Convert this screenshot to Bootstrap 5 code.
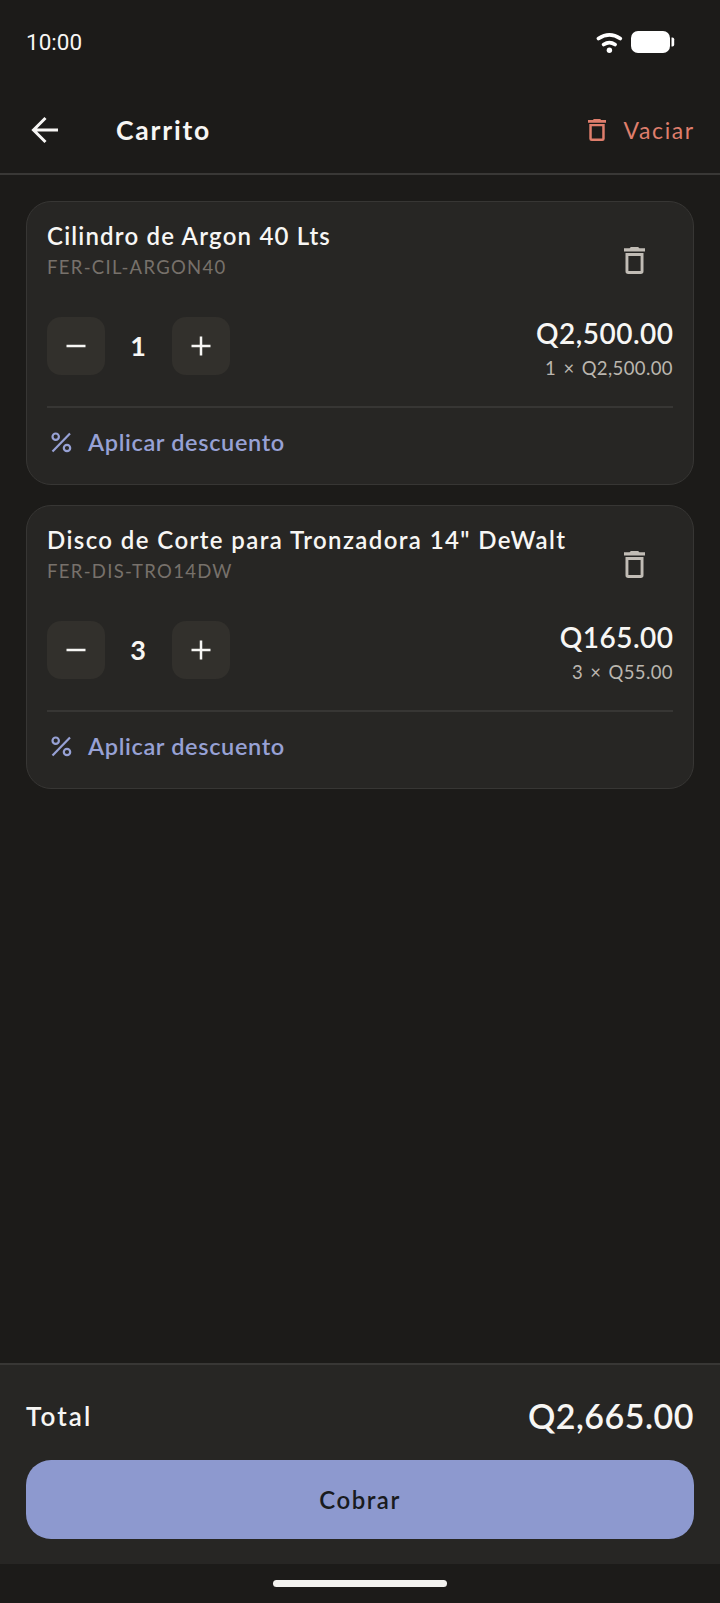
<!DOCTYPE html>
<html lang="es" data-bs-theme="dark">
<head>
<meta charset="utf-8">
<meta name="viewport" content="width=device-width, initial-scale=1">
<title>Carrito</title>
<link href="https://cdn.jsdelivr.net/npm/bootstrap@5.3.0/dist/css/bootstrap.min.css" rel="stylesheet">
<style>
body{background:#1c1b19;color:#f7f6f4;font-family:Lato,"Open Sans",sans-serif;height:1603px;overflow:hidden}
svg{display:block;flex:none}
.t{white-space:nowrap;display:inline-block}
.status-bar{height:84px;padding:0 45px 0 26px}
.clock{font:400 22.5px/28px Roboto,sans-serif}
.app-bar{height:91px;border-bottom:2px solid #393836;padding:3px 26px 0 31px}
.app-title{font-size:26.5px;font-weight:700;line-height:32px;margin-left:57px;letter-spacing:1.8px}
.clear-btn{color:#df7e6c;font-size:23px;line-height:30px;gap:18px}
.clear-btn .t{letter-spacing:1.6px;margin-right:-.8px}
.items{padding:26px 26px 0;gap:20px}
.item-card{background:#272624;border:1.5px solid #373634;border-radius:25px;height:284px;padding:19px 20px 0 20px}
.item-head{height:77px}
.item-name{font-size:24px;font-weight:600;line-height:30px;letter-spacing:1.2px}
.item-name.long-name{letter-spacing:1.4px}
.sku{font-size:18.5px;line-height:32px;color:#77716b;letter-spacing:1.3px}
.trash-box{width:77px;height:79px;color:#c1bcb5}
.item-mid{height:58px;margin-top:19px}
.step{width:58px;height:58px;border-radius:14px;background:#32302c;color:#f7f6f4}
.qty{width:67px;font-size:27px;font-weight:700;line-height:58px;padding-right:1px}
.amounts{padding-top:8px}
.price{font-size:28px;font-weight:600;line-height:36px}
.price .t{letter-spacing:.5px;margin-right:-.5px}
.unit{font-size:18.5px;line-height:34px;color:#bbb6af;letter-spacing:.4px;word-spacing:2px}
.discount{border-top:2px solid #373634;margin-top:31px;padding:19px 0 0 4px;color:#97a1d5;font-size:23.5px;font-weight:600;line-height:30px;gap:16px;letter-spacing:.65px}
.summary{height:201px;background:#272624;border-top:2px solid #383735;padding:30px 26px 0}
.total-row{height:42px}
.total-label{font-size:26px;font-weight:600;letter-spacing:2.1px}
.total-value{font-size:34px;font-weight:600;line-height:42px;letter-spacing:.5px}
.pay{height:79px;margin-top:23px;border-radius:25px;background:#8d99cf;color:#191b20;font-size:24px;font-weight:600;letter-spacing:1.5px}
.nav-zone{height:39px;padding-top:16px}
.nav-pill{width:174px;height:7px;border-radius:4px;background:#f3f2ef}
</style>
<script src="https://cdn.jsdelivr.net/npm/bootstrap@5.3.0/dist/js/bootstrap.bundle.min.js"></script>
</head>
<body class="d-flex flex-column">
<svg width="0" height="0" class="position-absolute"><defs>
<symbol id="trash" viewBox="0 0 21 27" preserveAspectRatio="none"><path fill="currentColor" fill-rule="evenodd" d="M0 1.3h5.600L6.900 0h7.200l1.300 1.300H21v3.300H0zM1.500 6h18v18.300a2.700 2.700 0 0 1-2.700 2.700H4.200a2.700 2.700 0 0 1-2.700-2.700zM4.400 9v15h12.200V9z"/></symbol>
</defs></svg>
<div class="status-bar d-flex align-items-center justify-content-between"><span class="clock t">10:00</span>
<div class="d-flex align-items-center"><svg class="me-2" width="27" height="21" viewBox="0 0 27 21" fill="none" stroke="#fff" stroke-width="3.8" stroke-linecap="round"><path d="M2.500 6.500Q13.500-.800 24.200 6.500M7.700 12.500q5.700-3.700 11.300 0"/><circle cx="13.400" cy="18.300" r="2.700" fill="#fff" stroke="none"/></svg>
<svg width="44" height="22" viewBox="0 0 44 22" fill="#fff"><rect width="39" height="22" rx="7"/><path d="M40.500 6.500h1q1.700 0 1.700 1.700v5.600q0 1.700-1.700 1.700h-1z"/></svg></div></div>
<header class="app-bar d-flex align-items-center"><svg width="28" height="28" viewBox="0 0 28 28" fill="none" stroke="currentColor" stroke-width="3"><path d="M27 14H3M14.500 2 2.500 14l12 12"/></svg>
<span class="app-title t">Carrito</span><span class="clear-btn d-flex align-items-center ms-auto"><svg width="18" height="22"><use href="#trash"/></svg><span class="t">Vaciar</span></span></header>
<main class="items d-flex flex-column flex-grow-1">
<article class="item-card">
<div class="item-head d-flex justify-content-between"><div><div><span class="item-name t">Cilindro de Argon 40 Lts</span></div><div class="sku"><span class="t">FER-CIL-ARGON40</span></div></div><div class="trash-box d-flex align-items-center justify-content-center"><svg width="21" height="27"><use href="#trash"/></svg></div></div>
<div class="item-mid d-flex align-items-center"><button class="step btn border-0 p-0 d-flex align-items-center justify-content-center"><svg width="20" height="20" stroke="currentColor" stroke-width="2.5"><path d="M.5 10h19"/></svg></button><span class="qty text-center">1</span><button class="step btn border-0 p-0 d-flex align-items-center justify-content-center"><svg width="20" height="20" stroke="currentColor" stroke-width="2.5"><path d="M.5 10h19M10 .5v19"/></svg></button>
<div class="amounts ms-auto text-end"><div class="price"><span class="t">Q2,500.00</span></div><div class="unit"><span class="t">1 × Q2,500.00</span></div></div></div>
<div class="discount d-flex align-items-center"><svg width="21" height="21" fill="none" stroke="currentColor" stroke-width="2.2"><circle cx="4.700" cy="4.700" r="3.200"/><circle cx="16" cy="16" r="3.200"/><path d="M1.500 19.500 19 1.500"/></svg><span class="t">Aplicar descuento</span></div>
</article>
<article class="item-card">
<div class="item-head d-flex justify-content-between"><div><div><span class="item-name long-name t">Disco de Corte para Tronzadora 14" DeWalt</span></div><div class="sku"><span class="t">FER-DIS-TRO14DW</span></div></div><div class="trash-box d-flex align-items-center justify-content-center"><svg width="21" height="27"><use href="#trash"/></svg></div></div>
<div class="item-mid d-flex align-items-center"><button class="step btn border-0 p-0 d-flex align-items-center justify-content-center"><svg width="20" height="20" stroke="currentColor" stroke-width="2.5"><path d="M.5 10h19"/></svg></button><span class="qty text-center">3</span><button class="step btn border-0 p-0 d-flex align-items-center justify-content-center"><svg width="20" height="20" stroke="currentColor" stroke-width="2.5"><path d="M.5 10h19M10 .5v19"/></svg></button>
<div class="amounts ms-auto text-end"><div class="price"><span class="t">Q165.00</span></div><div class="unit"><span class="t">3 × Q55.00</span></div></div></div>
<div class="discount d-flex align-items-center"><svg width="21" height="21" fill="none" stroke="currentColor" stroke-width="2.2"><circle cx="4.700" cy="4.700" r="3.200"/><circle cx="16" cy="16" r="3.200"/><path d="M1.500 19.500 19 1.500"/></svg><span class="t">Aplicar descuento</span></div>
</article>
</main>
<footer class="summary"><div class="total-row d-flex align-items-center justify-content-between"><span class="total-label t">Total</span><span class="total-value t">Q2,665.00</span></div>
<button class="pay btn border-0 w-100"><span class="t">Cobrar</span></button></footer>
<div class="nav-zone d-flex justify-content-center"><div class="nav-pill"></div></div>
</body></html>
